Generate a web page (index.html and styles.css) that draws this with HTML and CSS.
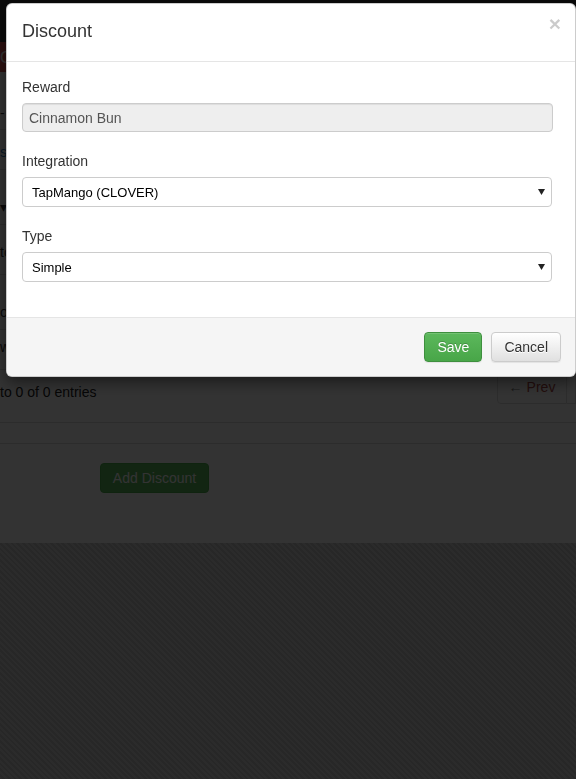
FILE: index.html
```html
<!DOCTYPE html>
<html lang="en">
<head>
<meta charset="utf-8">
<title>Discount</title>
<link rel="stylesheet" href="styles.css">
</head>
<body>
<div class="page">
  <header class="navbar"></header>
  <div class="alert-bar"><span class="frag">C</span></div>
  <div class="frag-row r1"><span class="frag">-</span></div>
  <div class="frag-row r2"><a class="frag link">s</a></div>
  <div class="frag-row r3"><span class="frag">&#9662;</span></div>
  <div class="frag-row r4"><span class="frag">to</span></div>
  <div class="frag-row r5"><span class="frag">o</span></div>
  <div class="frag-row r6"><span class="frag">w</span></div>
  <div class="table-info">
    <span class="info">to 0 of 0 entries</span>
    <a class="page-btn prev"><span class="arrow">&larr;</span> Prev</a>
    <span class="page-btn next"></span>
  </div>
  <div class="rule-band"></div>
  <div class="actions"><button class="btn-add">Add Discount</button></div>
</div>

<div class="backdrop"></div>

<div class="modal">
  <div class="modal-header">
    <h4 class="modal-title">Discount</h4>
    <button class="close" type="button">&times;</button>
  </div>
  <div class="modal-body">
    <div class="form-group">
      <label>Reward</label>
      <input class="form-control readonly" type="text" value="Cinnamon Bun" readonly>
    </div>
    <div class="form-group">
      <label>Integration</label>
      <div class="select-wrap">
        <select class="form-select"><option>TapMango (CLOVER)</option></select>
        <svg class="caret" width="7" height="6" viewBox="0 0 7 6"><path d="M0 0H7L3.5 6Z" fill="#222"/></svg>
      </div>
    </div>
    <div class="form-group last">
      <label>Type</label>
      <div class="select-wrap">
        <select class="form-select"><option>Simple</option></select>
        <svg class="caret" width="7" height="6" viewBox="0 0 7 6"><path d="M0 0H7L3.5 6Z" fill="#222"/></svg>
      </div>
    </div>
  </div>
  <div class="modal-footer">
    <button class="btn btn-success" type="button">Save</button>
    <button class="btn btn-default" type="button">Cancel</button>
  </div>
</div>
</body>
</html>
```

FILE: styles.css
```css
html, body {
  margin: 0;
  height: 100%;
}
body {
  font-family: "Liberation Sans", Arial, sans-serif;
  font-size: 14px;
  line-height: 20px;
  color: #333;
  overflow: hidden;
  background-color: #cbcbcb;
  background-image: repeating-linear-gradient(45deg, #d4d4d4 0 2px, #c4c4c4 2px 4px);
}

/* underlying page */
.page {
  background: #fff;
  height: 543px;
}
.navbar {
  height: 42px;
  background: #333;
}
.alert-bar {
  height: 30px;
  background: #d9534f;
  color: #fff;
  box-sizing: border-box;
  padding-top: 6px;
  font-size: 16px;
}
.frag {
  display: block;
  line-height: 20px;
}
.frag-row {
  box-sizing: border-box;
  border-bottom: 1px solid #ddd;
}
.r1 { height: 58px; padding-top: 31px; }
.r2 { height: 40px; padding-top: 12px; }
.r3 { height: 55px; padding-top: 27px; }
.r4 { height: 50px; padding-top: 17px; }
.r5 { height: 55px; padding-top: 27px; }
.r6 { height: 40px; padding-top: 7px; }
.link { color: #337ab7; }

.table-info {
  display: grid;
  grid-template-columns: 497px 70px 9px;
  height: 40px;
}
.info {
  padding-top: 12px;
  color: #222;
}
.page-btn {
  box-sizing: border-box;
  height: 34px;
  border: 1px solid #ddd;
  display: flex;
  align-items: center;
  justify-content: center;
  color: #a94442;
}
.prev { border-radius: 4px 0 0 4px; }
.prev .arrow { color: #777; margin-right: 4px; }
.next { border-left: 0; }

.rule-band {
  margin-top: 12px;
  height: 20px;
  border-top: 1px solid #ddd;
  border-bottom: 1px solid #ddd;
}
.actions {
  padding: 19px 0 0 100px;
}
.btn-add {
  height: 30px;
  width: 109px;
  border: 1px solid #4cae4c;
  border-radius: 4px;
  background: #5cb85c;
  color: #fff;
  font-family: inherit;
  font-size: 14px;
  padding: 0;
}

/* backdrop */
.backdrop {
  position: fixed;
  inset: 0;
  background: rgba(0, 0, 0, 0.8);
}

/* modal */
.modal {
  position: fixed;
  top: 3px;
  left: 6px;
  width: 570px;
  box-sizing: border-box;
  background: #fff;
  border: 1px solid rgba(0, 0, 0, 0.2);
  border-radius: 6px;
  box-shadow: 0 5px 15px rgba(0, 0, 0, 0.5);
  overflow: hidden;
}
.modal-header {
  display: flex;
  justify-content: space-between;
  align-items: flex-start;
  padding: 14px 15px 16px;
  border-bottom: 1px solid #e5e5e5;
}
.modal-title {
  margin: 0;
  font-size: 18px;
  font-weight: normal;
  line-height: 27px;
  color: #333;
}
.close {
  margin: -5px -1px 0 0;
  padding: 0;
  border: 0;
  background: none;
  font-family: inherit;
  font-size: 21px;
  font-weight: bold;
  line-height: 1;
  color: #000;
  opacity: 0.2;
  text-shadow: 0 1px 0 #fff;
}
.modal-body {
  padding: 15px;
}
.form-group {
  margin: 0 7px 19px 0;
}
.form-group.last {
  margin-bottom: 20px;
}
label {
  display: block;
  margin-bottom: 6px;
  line-height: 20px;
  color: #333;
}
.form-control {
  display: block;
  width: 100%;
  box-sizing: border-box;
  height: 29px;
  padding: 0 6px;
  border: 1px solid #ccc;
  border-radius: 4px;
  font-family: inherit;
  font-size: 14px;
  color: #555;
  box-shadow: inset 0 1px 1px rgba(0, 0, 0, 0.075);
}
.form-control.readonly {
  background: #eee;
}
.select-wrap {
  position: relative;
  margin-right: 1px;
}
.form-select {
  display: block;
  width: 100%;
  box-sizing: border-box;
  height: 30px;
  padding: 0 24px 0 9px;
  border: 1px solid #ccc;
  border-radius: 4px;
  background: #fff;
  -webkit-appearance: none;
  appearance: none;
  font-family: "Liberation Sans", Arial, sans-serif;
  font-size: 13px;
  color: #000;
}
.caret {
  position: absolute;
  right: 7px;
  top: 12px;
  display: block;
}
.modal-footer {
  display: flex;
  justify-content: flex-end;
  gap: 9px;
  padding: 14px 14px 14px 15px;
  border-top: 1px solid #e5e5e5;
  background: #f5f5f5;
}
.btn {
  font-family: inherit;
  font-size: 14px;
  line-height: 18px;
  padding: 5px 12px;
  border: 1px solid;
  border-radius: 4px;
  box-shadow: inset 0 1px 0 rgba(255, 255, 255, 0.15), 0 1px 1px rgba(0, 0, 0, 0.075);
}
.btn-success {
  color: #fff;
  background: linear-gradient(#5cb85c, #48a648);
  border-color: #3e8f3e;
  text-shadow: 0 -1px 0 rgba(0, 0, 0, 0.2);
}
.btn-default {
  color: #333;
  background: linear-gradient(#fff, #e0e0e0);
  border-color: #ccc;
  text-shadow: 0 1px 0 #fff;
}
```
